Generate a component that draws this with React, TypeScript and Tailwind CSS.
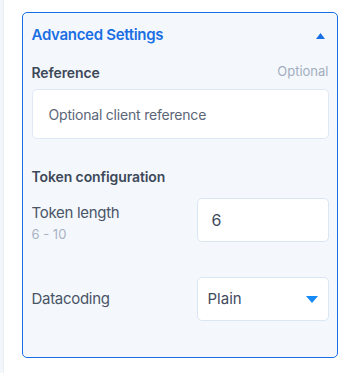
import React from "react";

export default function App() {
  return (
    <div className="w-[340px] h-[373px] bg-white flex" style={{ fontFamily: "Inter, 'Noto Sans', sans-serif" }}>
      <div className="w-[4px] h-full bg-[#f3f7fc] border-r border-[#e8eef6]" />
      <div className="pl-[18px] pt-[12px] pr-[2px]">
        <div className="w-[316px] h-[346px] rounded-[5px] border-[1.5px] border-[#1b6fe6] bg-[#f4f8fd] px-[8.5px]">
          <div className="flex items-center justify-between h-[44px] pt-[1px]">
            <span className="text-[15px] font-semibold text-[#1a6fe3] tracking-[-0.3px]">Advanced Settings</span>
            <svg width="9" height="6" viewBox="0 0 9 6" className="mr-[4px]">
              <polygon points="4.5,0 9,6 0,6" fill="#1a6fe3" />
            </svg>
          </div>
          <div className="flex items-center justify-between mt-[5px] h-[20px]">
            <span className="text-[14px] font-semibold text-[#3d4859] tracking-[-0.1px]">Reference</span>
            <span className="text-[13px] text-[#a3adbd]">Optional</span>
          </div>
          <div className="mt-[7px] h-[50px] rounded-[5px] border border-[#dfe9f6] bg-white flex items-center pl-[16px]">
            <span className="text-[14px] text-[#5b6578] tracking-[-0.2px]">Optional client reference</span>
          </div>
          <div className="mt-[27px] text-[14px] font-semibold text-[#3d4859] h-[20px] flex items-center tracking-[-0.1px]">Token configuration</div>
          <div className="mt-[12px] flex items-start justify-between">
            <div className="pt-[5px]">
              <div className="text-[15px] text-[#4a5467] leading-[20px] tracking-[-0.3px]">Token length</div>
              <div className="text-[13px] text-[#a9b2c1] leading-[16px] mt-[3px]">6 - 10</div>
            </div>
            <div className="w-[132px] h-[44px] rounded-[5px] border border-[#dbe6f5] bg-white flex items-center pl-[14px]">
              <span className="text-[16px] text-[#3f4a5c]">6</span>
            </div>
          </div>
          <div className="mt-[35px] flex items-center justify-between">
            <span className="text-[15px] text-[#4a5467] tracking-[-0.3px]">Datacoding</span>
            <div className="w-[132px] h-[44px] rounded-[5px] border border-[#dbe6f5] bg-white flex items-center justify-between pl-[10px] pr-[10px]">
              <span className="text-[15px] text-[#3f4a5c]">Plain</span>
              <svg width="12" height="7" viewBox="0 0 12 7">
                <polygon points="0,0 12,0 6,7" fill="#1789f7" />
              </svg>
            </div>
          </div>
        </div>
      </div>
    </div>
  );
}
